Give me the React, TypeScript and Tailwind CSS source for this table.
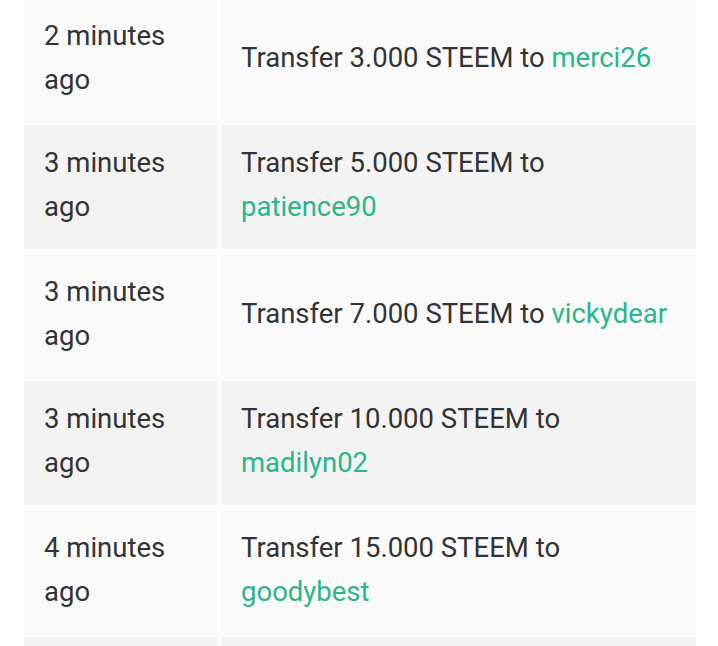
const rows = [
  { time: "2 minutes ago", amount: "3.000", to: "merci26" },
  { time: "3 minutes ago", amount: "5.000", to: "patience90" },
  { time: "3 minutes ago", amount: "7.000", to: "vickydear" },
  { time: "3 minutes ago", amount: "10.000", to: "madilyn02" },
  { time: "4 minutes ago", amount: "15.000", to: "goodybest" },
];

export default function App() {
  return (
    <div className="w-[718px] h-[646px] overflow-hidden bg-white font-['Roboto',sans-serif] text-[27.5px] leading-[44px] text-[#333]">
      <div className="-mt-[5px] ml-6 mr-[22px] grid grid-cols-[193px_1fr] gap-x-1 gap-y-0.5">
        {rows.map((row, i) => {
          // light rows sit a little taller than the grey ones
          const cell =
            i % 2 === 0
              ? "bg-[#fafafa] flex items-center px-5 pt-[19px] pb-[21px]"
              : "bg-[#f3f3f3] flex items-center px-5 pt-4 pb-5";
          return (
            <div key={i} className="contents">
              <div className={cell}>{row.time}</div>
              <div className={cell}>
                <span>
                  Transfer {row.amount} STEEM to{" "}
                  <span className="text-[#2bb68a]">{row.to}</span>
                </span>
              </div>
            </div>
          );
        })}
        {/* next row, only its top edge is in view */}
        <div className="bg-[#f3f3f3] h-[124px]" />
        <div className="bg-[#f3f3f3] h-[124px]" />
      </div>
    </div>
  );
}
